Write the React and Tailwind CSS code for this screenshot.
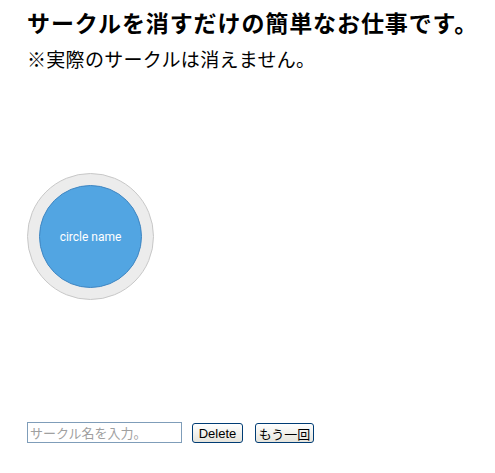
import React, { useState } from "react";

function App() {
  const [name, setName] = useState("");

  return (
    <div className="w-[495px] h-[473px] bg-white flex flex-col pl-[27px] font-['Noto_Sans_CJK_JP','Liberation_Sans',sans-serif] text-black">
      {/* 見出し */}
      <h1 className="mt-[9px] text-[23px] leading-[26px] font-bold tracking-[0.9px]">
        サークルを消すだけの簡単なお仕事です。
      </h1>
      <p className="mt-[13px] text-[19px] leading-[22px] tracking-[0.3px]">※実際のサークルは消えません。</p>

      {/* サークル */}
      <div className="mt-[103px] w-[127px] h-[127px] rounded-full bg-[#ececec] border border-[#c8c8c8] flex items-center justify-center">
        <div className="w-[103px] h-[103px] rounded-full bg-[#52a5e2] border border-[#3f86c2] flex items-center justify-center">
          <span className="text-white text-[12px] font-['Roboto',sans-serif]">circle name</span>
        </div>
      </div>

      {/* 入力フォーム */}
      <div className="mt-[122px] flex items-end">
        <input
          value={name}
          onChange={(e) => setName(e.target.value)}
          placeholder="サークル名を入力。"
          className="w-[155px] h-[21px] border border-[#7f9db9] px-[2px] text-[13px] placeholder:text-[#a0a0a0] outline-none"
        />
        <button className="ml-[10px] h-[20px] w-[51px] text-[13px] leading-none font-['Liberation_Sans',sans-serif] border border-[#003c74] rounded-[3px] bg-gradient-to-b from-white to-[#e6e4dc]">
          Delete
        </button>
        <button className="ml-[12px] h-[20px] w-[59px] text-[13px] leading-none border border-[#003c74] rounded-[3px] bg-gradient-to-b from-white to-[#e6e4dc]">
          もう一回
        </button>
      </div>
    </div>
  );
}

export default App;
